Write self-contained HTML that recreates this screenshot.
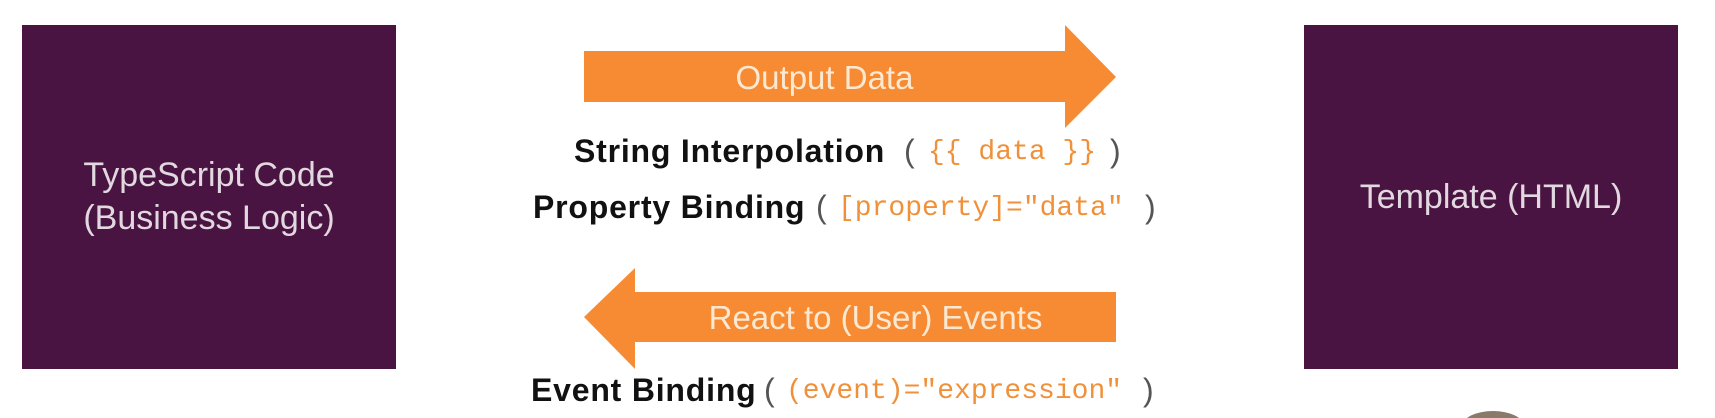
<!DOCTYPE html>
<html><head><style>
html,body{margin:0;width:1715px;height:418px;overflow:hidden}
body{background:#fff;position:relative;font-family:"Liberation Sans",sans-serif}
.box{position:absolute;background:#4a1442;color:#e2d8e0;font-size:34px;text-align:center;display:flex;align-items:center;justify-content:center;line-height:43px}
.t{position:absolute;white-space:nowrap;line-height:1}
.b{font-size:32px;color:#111;font-weight:bold;letter-spacing:0.8px}
.p{font-size:32px;color:#555}
.c{font-family:"Liberation Mono",monospace;color:#f0913a;font-size:28px}
.at{position:absolute;color:#fde9d2;white-space:nowrap;text-align:center;line-height:1}
</style></head><body>
<div class="box" style="left:22px;top:25px;width:374px;height:344px">TypeScript Code<br>(Business Logic)</div>
<div class="box" style="left:1304px;top:25px;width:374px;height:344px">Template (HTML)</div>
<svg style="position:absolute;left:0;top:0" width="1715" height="418">
<polygon fill="#f68b33" points="584,51 1065,51 1065,25 1116,77 1065,128 1065,102 584,102"/>
<polygon fill="#f68b33" points="1116,292 635,292 635,268 584,317 635,369 635,342 1116,342"/>
<ellipse cx="1493" cy="425" rx="30" ry="14" fill="#8a7a6a"/>
</svg>
<div class="at" style="left:584px;width:481px;top:61px;font-size:33px">Output Data</div>
<div class="at" style="left:635px;width:481px;top:301px;font-size:33px">React to (User) Events</div>

<div class="t b" style="left:574px;top:135px">String Interpolation</div>
<div class="t p" style="left:904px;top:135px">(</div>
<div class="t c" style="left:928px;top:139px">{{ data }}</div>
<div class="t p" style="left:1110px;top:135px">)</div>

<div class="t b" style="left:533px;top:191px">Property Binding</div>
<div class="t p" style="left:816px;top:191px">(</div>
<div class="t c" style="left:838px;top:195px">[property]="data"</div>
<div class="t p" style="left:1145px;top:191px">)</div>

<div class="t b" style="left:531px;top:374px">Event Binding</div>
<div class="t p" style="left:764px;top:374px">(</div>
<div class="t c" style="left:786px;top:378px">(event)="expression"</div>
<div class="t p" style="left:1143px;top:374px">)</div>
</body></html>
